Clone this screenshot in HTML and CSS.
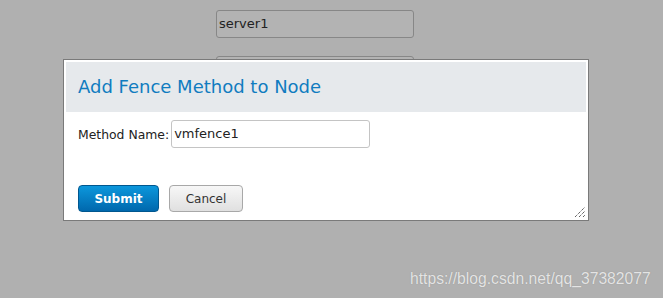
FILE: index.html
```html
<!DOCTYPE html>
<html>
<head>
<meta charset="utf-8">
<link rel="stylesheet" href="styles.css">
</head>
<body>
<div class="page">
  <div class="field">server1</div>
  <div class="field"></div>
</div>

<div class="dialog">
  <div class="dlg-head">Add Fence Method to Node</div>
  <div class="dlg-body">
    <div class="row">
      <span class="label">Method Name:</span>
      <span class="input">vmfence1</span>
    </div>
    <div class="actions">
      <button class="btn primary">Submit</button>
      <button class="btn secondary">Cancel</button>
    </div>
  </div>
  <svg class="grip" width="12" height="12" viewBox="0 0 12 12">
    <path d="M1 11 L11 1 M5 11 L11 5 M9 11 L11 9" stroke="#222" stroke-width="1" stroke-dasharray="1 1" fill="none"/>
  </svg>
</div>

<div class="watermark">https://blog.csdn.net/qq_37382077</div>
</body>
</html>
```

FILE: styles.css
```css
html, body {
  margin: 0;
  padding: 0;
}
body {
  background: #b0b0b0;
  width: 663px;
  height: 298px;
  overflow: hidden;
  position: relative;
  font-family: "DejaVu Sans", sans-serif;
}
.page {
  padding: 10px 0 0 216px;
  display: flex;
  flex-direction: column;
  gap: 18px;
}
.field {
  box-sizing: border-box;
  width: 198px;
  height: 28px;
  border: 1px solid #878787;
  border-radius: 3px;
  background: #b3b3b3;
  color: #222;
  font-size: 13px;
  line-height: 26px;
  padding-left: 2px;
}
.dialog {
  position: absolute;
  left: 63px;
  top: 59px;
  width: 520px;
  height: 156px;
  background: #fff;
  border: 1px solid #7a7a7a;
  padding: 2px;
}
.dlg-head {
  height: 50px;
  background: #e6e9ec;
  color: #107cc0;
  font-size: 18px;
  line-height: 50px;
  padding-left: 12px;
}
.dlg-body {
  padding: 8px 0 0 12px;
}
.row {
  display: flex;
  align-items: center;
  font-size: 12.4px;
  color: #222;
}
.label {
  margin-right: 2px;
}
.input {
  box-sizing: border-box;
  width: 199px;
  height: 28px;
  border: 1px solid #c4c4c4;
  border-radius: 3px;
  line-height: 26px;
  padding-left: 2px;
  font-size: 13px;
  color: #222;
}
.actions {
  display: flex;
  gap: 10px;
  margin-top: 37px;
}
.btn {
  box-sizing: border-box;
  height: 27px;
  border-radius: 4px;
  font-family: "DejaVu Sans", sans-serif;
  font-size: 12px;
  padding: 0;
}
.primary {
  width: 81px;
  background: linear-gradient(#0c97dc, #0068ad);
  border: 1px solid #00578f;
  color: #fff;
  font-weight: bold;
}
.secondary {
  width: 74px;
  background: linear-gradient(#f7f7f7, #e0e0e0);
  border: 1px solid #a8a8a8;
  color: #333;
}
.grip {
  position: absolute;
  right: 2px;
  bottom: 2px;
}
.watermark {
  position: absolute;
  left: 410px;
  top: 270px;
  font-family: "Liberation Sans", Arial, sans-serif;
  font-size: 15.7px;
  color: #e4e4e4;
  text-shadow: 0 0 1px #8a8a8a;
}
```
